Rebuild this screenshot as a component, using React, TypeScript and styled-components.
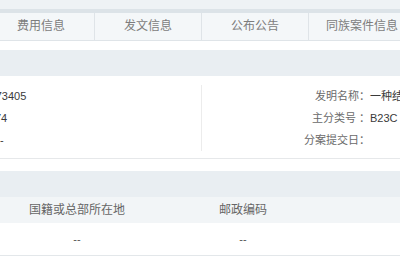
import styled, { createGlobalStyle } from 'styled-components'

const GlobalStyle = createGlobalStyle`
  html, body {
    margin: 0;
    padding: 0;
    background: #fff;
    overflow: hidden;
  }
  body {
    font-family: "Liberation Sans", "Noto Sans CJK SC", sans-serif;
    color: #666;
  }
`

const Viewport = styled.div`
  width: 400px;
  height: 260px;
  overflow: hidden;
`

const Page = styled.div`
  width: 866px;
  margin-left: -226px;
`

const TopStrip = styled.div`
  height: 9px;
  background: #eef2f5;
`

const TabBar = styled.ul`
  display: flex;
  margin: 0;
  padding: 0;
  list-style: none;
  height: 27px;
  background: #f4f7f9;
  border-top: 4px solid #dce3e8;
  border-bottom: 1px solid #dfe4e8;
`

const Tab = styled.li`
  flex: 0 0 107px;
  box-sizing: border-box;
  border-right: 1px solid #dfe4e8;
  font-size: 12px;
  line-height: 27px;
  text-align: center;
  color: #7d7d7d;
`

const Section = styled.section<{ $gap: number }>`
  margin-top: ${(p) => p.$gap}px;
`

const SectionHead = styled.h3`
  margin: 0;
  height: 26px;
  padding-left: 12px;
  background: #e9eef2;
  font-size: 12px;
  font-weight: normal;
  line-height: 26px;
  color: #555;
`

const InfoBody = styled.div`
  display: grid;
  grid-template-columns: 427px 1fr;
  padding: 9px 0 7px;
  border-bottom: 1px solid #e6e8ea;
`

const InfoColumn = styled.div<{ $divided?: boolean }>`
  border-left: ${(p) => (p.$divided ? '1px solid #ececec' : 'none')};
`

const Field = styled.div`
  display: flex;
  height: 22px;
  line-height: 22px;
  font-size: 11px;
  white-space: nowrap;
`

const Label = styled.span<{ $w: number }>`
  flex: 0 0 ${(p) => p.$w}px;
  text-align: right;
  color: #6a6a6a;
`

const Value = styled.span`
  color: #3a3a3a;
`

const Table = styled.div`
  display: grid;
  grid-template-columns: 220px 166px 166px 1fr;
`

const HeadCell = styled.div`
  height: 26px;
  line-height: 26px;
  background: #f2f5f7;
  font-size: 12px;
  text-align: center;
  color: #666;
`

const Cell = styled.div`
  height: 32px;
  line-height: 32px;
  border-bottom: 1px solid #e3e7ea;
  font-size: 11px;
  text-align: center;
  color: #555;
`

const tabs = ['基本信息', '审查信息', '费用信息', '发文信息', '公布公告', '同族案件信息']

const leftFields = [
  ['申请号：', 'CN201910773405'],
  ['公开号：', 'CN110480074'],
  ['申请日：', '2020-03-06 --'],
]

const rightFields = [
  ['发明名称：', '一种结构紧凑的多功能加工装置'],
  ['主分类号 ：', 'B23C 3/00'],
  ['分案提交日：', ''],
]

const applicantCols = ['申请人', '国籍或总部所在地', '邮政编码', '地址']
const applicantRow = ['某某科技有限公司', '--', '--', '--']

const App = () => (
  <Viewport>
    <GlobalStyle />
    <Page>
      <TopStrip />
      <TabBar>
        {tabs.map((t) => (
          <Tab key={t}>{t}</Tab>
        ))}
      </TabBar>

      <Section $gap={9}>
        <SectionHead>著录项目</SectionHead>
        <InfoBody>
          <InfoColumn>
            {leftFields.map(([l, v]) => (
              <Field key={l}>
                <Label $w={163}>{l}</Label>
                <Value>{v}</Value>
              </Field>
            ))}
          </InfoColumn>
          <InfoColumn $divided>
            {rightFields.map(([l, v]) => (
              <Field key={l}>
                <Label $w={168}>{l}</Label>
                <Value>{v}</Value>
              </Field>
            ))}
          </InfoColumn>
        </InfoBody>
      </Section>

      <Section $gap={12}>
        <SectionHead>申请人</SectionHead>
        <Table>
          {applicantCols.map((c) => (
            <HeadCell key={c}>{c}</HeadCell>
          ))}
          {applicantRow.map((c, i) => (
            <Cell key={i}>{c}</Cell>
          ))}
        </Table>
      </Section>
    </Page>
  </Viewport>
)

export default App
